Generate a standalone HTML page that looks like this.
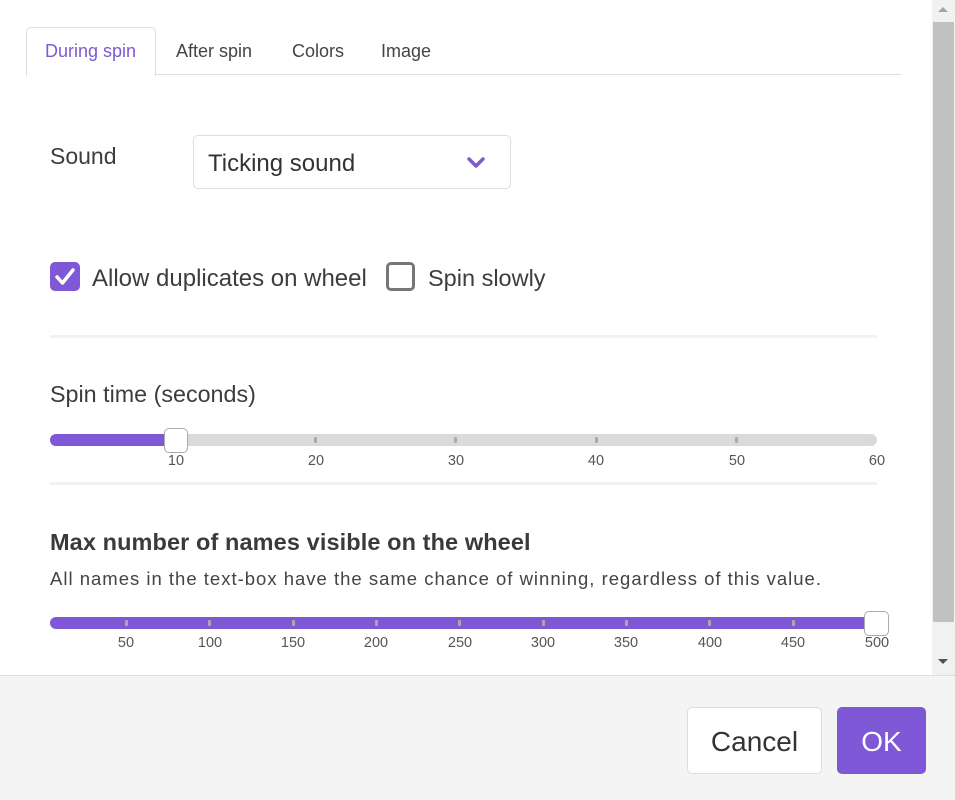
<!DOCTYPE html>
<html><head><meta charset="utf-8"><style>
*{box-sizing:border-box;margin:0;padding:0}
body{width:955px;height:800px;overflow:hidden;background:#fff;font-family:"Liberation Sans",sans-serif;color:#3d3d3d;position:relative}
.a{position:absolute}
.tab{position:absolute;top:41px;font-size:18px;color:#444}
.lbl{position:absolute;font-size:14.5px;color:#555;transform:translateX(-50%);top:453px}
.tick{position:absolute;width:3px;height:6px;border-radius:1px;background:#aaa}
</style></head><body>
<div class="a" style="left:26px;top:27px;width:130px;height:49px;border:1px solid #ddd;border-bottom:none;border-radius:5px 5px 0 0;background:#fff;z-index:2"></div>
<div class="a" style="left:26px;top:74px;width:875px;height:1px;background:#ddd"></div>
<div class="tab" style="left:45px;color:#7e58d6;z-index:3">During spin</div>
<div class="tab" style="left:176px">After spin</div>
<div class="tab" style="left:292px">Colors</div>
<div class="tab" style="left:381px">Image</div>

<div class="a" style="left:50px;top:143px;font-size:23px">Sound</div>
<div class="a" style="left:193px;top:135px;width:318px;height:54px;border:1px solid #ddd;border-radius:5px"></div>
<div class="a" style="left:208px;top:150px;font-size:24px;color:#333">Ticking sound</div>
<svg class="a" style="left:466px;top:156px" width="20" height="14" viewBox="0 0 20 14"><path d="M3 3 L10 10 L17 3" stroke="#7e58d6" stroke-width="3.5" fill="none" stroke-linecap="round" stroke-linejoin="round"/></svg>

<div class="a" style="left:50px;top:262px;width:30px;height:29px;border-radius:5px;background:#7e58d6"></div>
<svg class="a" style="left:50px;top:262px" width="30" height="29"><path d="M7 15 L12.5 21 L23 8" stroke="#fff" stroke-width="3.5" fill="none" stroke-linecap="round" stroke-linejoin="round"/></svg>
<div class="a" style="left:92px;top:265px;font-size:24px">Allow duplicates on wheel</div>
<div class="a" style="left:386px;top:262px;width:29px;height:29px;border-radius:5px;border:3px solid #777"></div>
<div class="a" style="left:428px;top:265px;font-size:23.5px">Spin slowly</div>

<div class="a" style="left:50px;top:335px;width:827px;height:3px;background:#f2f2f2"></div>
<div class="a" style="left:50px;top:381px;font-size:23.3px">Spin time (seconds)</div>

<div class="a" style="left:50px;top:434px;width:827px;height:12px;border-radius:6px;background:#dadada"></div>
<div class="a" style="left:50px;top:434px;width:125px;height:12px;border-radius:6px 0 0 6px;background:#7e58d6"></div>
<div class="tick" style="left:314px;top:437px"></div>
<div class="tick" style="left:454px;top:437px"></div>
<div class="tick" style="left:595px;top:437px"></div>
<div class="tick" style="left:735px;top:437px"></div>
<div class="a" style="left:164px;top:428px;width:24px;height:25px;border:1px solid #aaa;border-radius:5px;background:#fff"></div>
<div class="lbl" style="left:176px">10</div>
<div class="lbl" style="left:316px">20</div>
<div class="lbl" style="left:456px">30</div>
<div class="lbl" style="left:596px">40</div>
<div class="lbl" style="left:737px">50</div>
<div class="lbl" style="left:877px">60</div>

<div class="a" style="left:50px;top:482px;width:827px;height:3px;background:#f2f2f2"></div>
<div class="a" style="left:50px;top:529px;font-size:23.5px;font-weight:bold;color:#3a3a3a;letter-spacing:0.1px">Max number of names visible on the wheel</div>
<div class="a" style="left:50px;top:568px;font-size:18.5px;color:#444;letter-spacing:1px">All names in the text-box have the same chance of winning, regardless of this value.</div>

<div class="a" style="left:50px;top:617px;width:827px;height:12px;border-radius:6px;background:#7e58d6"></div>
<div class="tick" style="left:125px;top:620px"></div>
<div class="tick" style="left:208px;top:620px"></div>
<div class="tick" style="left:292px;top:620px"></div>
<div class="tick" style="left:375px;top:620px"></div>
<div class="tick" style="left:458px;top:620px"></div>
<div class="tick" style="left:542px;top:620px"></div>
<div class="tick" style="left:625px;top:620px"></div>
<div class="tick" style="left:708px;top:620px"></div>
<div class="tick" style="left:792px;top:620px"></div>
<div class="a" style="left:864px;top:611px;width:25px;height:25px;border:1px solid #aaa;border-radius:5px;background:#fff"></div>
<div class="lbl" style="left:126px;top:635px">50</div>
<div class="lbl" style="left:210px;top:635px">100</div>
<div class="lbl" style="left:293px;top:635px">150</div>
<div class="lbl" style="left:376px;top:635px">200</div>
<div class="lbl" style="left:460px;top:635px">250</div>
<div class="lbl" style="left:543px;top:635px">300</div>
<div class="lbl" style="left:626px;top:635px">350</div>
<div class="lbl" style="left:710px;top:635px">400</div>
<div class="lbl" style="left:793px;top:635px">450</div>
<div class="lbl" style="left:877px;top:635px">500</div>

<div class="a" style="left:932px;top:0;width:23px;height:675px;background:#f1f1f1"></div>
<div class="a" style="left:933px;top:22px;width:21px;height:600px;background:#c1c1c1"></div>
<div class="a" style="left:938px;top:7px;width:0;height:0;border-left:5px solid transparent;border-right:5px solid transparent;border-bottom:5px solid #a3a3a3"></div>
<div class="a" style="left:938px;top:659px;width:0;height:0;border-left:5px solid transparent;border-right:5px solid transparent;border-top:5px solid #505050"></div>

<div class="a" style="left:0;top:675px;width:955px;height:125px;background:#f4f4f4;border-top:1px solid #ddd"></div>
<div class="a" style="left:687px;top:707px;width:135px;height:67px;background:#fff;border:1px solid #ddd;border-radius:5px;font-size:28px;color:#333;text-align:center;line-height:67px">Cancel</div>
<div class="a" style="left:837px;top:707px;width:89px;height:67px;background:#7e58d6;border-radius:5px;font-size:28px;color:#fff;text-align:center;line-height:69px">OK</div>
</body></html>
